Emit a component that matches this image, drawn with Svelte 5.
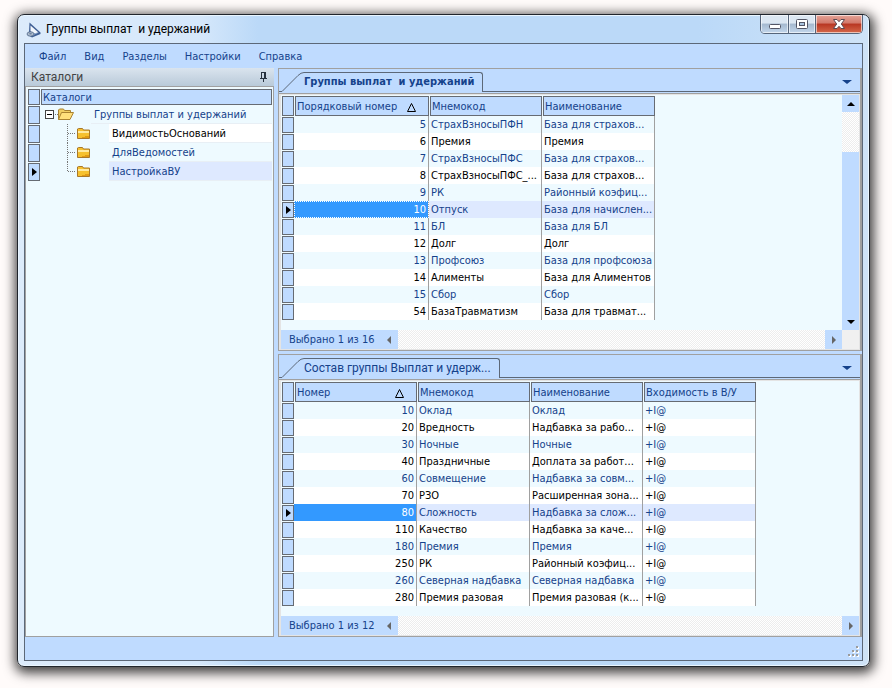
<script>
  let currentNode = 3
  let currentGroup = 5
  let currentItem = 6

  const menu = ['Файл', 'Вид', 'Разделы', 'Настройки', 'Справка']

  const nodes = [
    { title: 'Группы выплат и удержаний', root: true },
    { title: 'ВидимостьОснований' },
    { title: 'ДляВедомостей' },
    { title: 'НастройкаВУ' }
  ]

  const groups = {
    id: 'groups',
    columns: ['Порядковый номер', 'Мнемокод', 'Наименование'],
    rows: [
      [5, 'СтрахВзносыПФН', 'База для страхов...'],
      [6, 'Премия', 'Премия'],
      [7, 'СтрахВзносыПФС', 'База для страхов...'],
      [8, 'СтрахВзносыПФС_...', 'База для страхов...'],
      [9, 'РК', 'Районный коэфиц...'],
      [10, 'Отпуск', 'База для начислен...'],
      [11, 'БЛ', 'База для БЛ'],
      [12, 'Долг', 'Долг'],
      [13, 'Профсоюз', 'База для профсоюза'],
      [14, 'Алименты', 'База для Алиментов'],
      [15, 'Сбор', 'Сбор'],
      [54, 'БазаТравматизм', 'База для травмат...']
    ]
  }

  const items = {
    id: 'items',
    columns: ['Номер', 'Мнемокод', 'Наименование', 'Входимость в В/У'],
    rows: [
      [10, 'Оклад', 'Оклад', '+I@'],
      [20, 'Вредность', 'Надбавка за рабо...', '+I@'],
      [30, 'Ночные', 'Ночные', '+I@'],
      [40, 'Праздничные', 'Доплата за работ...', '+I@'],
      [60, 'Совмещение', 'Надбавка за совм...', '+I@'],
      [70, 'РЗО', 'Расширенная зона...', '+I@'],
      [80, 'Сложность', 'Надбавка за слож...', '+I@'],
      [110, 'Качество', 'Надбавка за каче...', '+I@'],
      [180, 'Премия', 'Премия', '+I@'],
      [250, 'РК', 'Районный коэфиц...', '+I@'],
      [260, 'Северная надбавка', 'Северная надбавка', '+I@'],
      [280, 'Премия разовая', 'Премия разовая (к...', '+I@']
    ]
  }

  $: panes = [
    { grid: groups, title: 'Группы выплат  и удержаний', current: currentGroup, active: true, vscroll: true, status: 'Выбрано 1 из 16' },
    { grid: items, title: 'Состав группы Выплат и удерж...', current: currentItem, status: 'Выбрано 1 из 12' }
  ]

  function select(grid, i) {
    if (grid === groups) currentGroup = i
    else currentItem = i
  }
</script>

<div class="desktop">
  <div class="window">
    <header class="titlebar">
      <svg class="logo" width="16" height="16" viewBox="0 0 16 16">
        <path d="M3.500 .5 L3 10 L1 12.500 L6 15.500 L14.500 12 V10.500 Z" fill="#3f5f94" />
        <path d="M4.500 3.500 L12.500 10.500 L7 11.500 L4.500 9 Z" fill="#f4f8fd" />
        <path d="M7 11.500 L13 10.500 L7.500 13 Z" fill="#9db6d8" />
        <ellipse cx="4.500" cy="12" rx="3.500" ry="2.200" fill="#aebccd" stroke="#526a8c" stroke-width="0.8" />
        <ellipse cx="4.500" cy="11.800" rx="1.400" ry="0.800" fill="#6b7f9c" />
      </svg>
      <h1>Группы выплат&nbsp; и удержаний</h1>
      <div class="caption">
        <button class="min" aria-label="Свернуть">
          <svg width="12" height="6" viewBox="0 0 12 6"><rect x=".5" y=".5" width="11" height="4" rx="1" fill="#fff" stroke="#535666" /></svg>
        </button>
        <button class="max" aria-label="Развернуть">
          <svg width="12" height="10" viewBox="0 0 12 10">
            <rect x=".5" y=".5" width="11" height="9" rx="1" fill="#fff" stroke="#535666" />
            <rect x="3.500" y="3.500" width="5" height="3" fill="#a8c3de" stroke="#535666" />
          </svg>
        </button>
        <button class="shut" aria-label="Закрыть">
          <svg width="12" height="10" viewBox="0 0 12 10">
            <path d="M.5 .5 H4 L6 2.700 L8 .5 H11.500 L8.300 5 L11.500 9.500 H8 L6 7.300 L4 9.500 H.5 L3.700 5 Z" fill="#fff" stroke="#5d4b52" />
          </svg>
        </button>
      </div>
    </header>

    <div class="client">
      <nav>
        {#each menu as item}
          <button>{item}</button>
        {/each}
      </nav>

      <div class="work">
        <aside>
          <div class="dock-title">
            <h2>Каталоги</h2>
            <button aria-label="Закрепить">
              <svg width="9" height="11" viewBox="0 0 9 11" shape-rendering="crispEdges">
                <path d="M2 0h5v6h1v1H5v3H4V7H1V6h1zM3 1v5h2V1z" fill="#27323f" fill-rule="evenodd" />
              </svg>
            </button>
          </div>
          <div class="tree">
            <div class="tree-row tree-head">
              <span class="mark"></span>
              <span class="tree-caption">Каталоги</span>
            </div>
            {#each nodes as node, i}
              <div class="tree-row">
                <span class="mark" class:current={i === currentNode}></span>
                {#if node.root}
                  <svg class="branch" width="51" height="19" viewBox="0 0 51 19">
                    <rect x="5.500" y="5.500" width="8" height="8" fill="#fff" stroke="#444" />
                    <path d="M7 9.500H12" stroke="#000" />
                    <path d="M15 9.500H18" stroke="#777" stroke-dasharray="1 1" />
                    <path d="M18.500 14.500V5l1-1h4l1 1.500h6V8" fill="#f0cd62" stroke="#a98231" />
                    <path d="M18.500 14.500L21.500 7.500H33.500l-3.500 7z" fill="#ffdf7b" stroke="#a98231" />
                  </svg>
                {:else}
                  <svg class="branch" width="69" height="19" viewBox="0 0 69 19">
                    <path d={i === nodes.length - 1 ? 'M27.500 0V9.500H36' : 'M27.500 0V19M28 9.500H36'} fill="none" stroke="#777" stroke-dasharray="1 1" />
                    <path d="M37.500 14.500V5l1-.5h4l1 1.500h6v8.500z" fill="#f6c12f" stroke="#a8782a" />
                    <path d="M38 8.500H49M38 7.500H49" stroke="#ffeaa0" />
                    <path d="M42 13.500H49M45 12.500H49" stroke="#e09a14" />
                  </svg>
                {/if}
                <button class="node" class:current={i === currentNode} on:click={() => (currentNode = i)}>{node.title}</button>
              </div>
            {/each}
          </div>
        </aside>

        <main>
          {#each panes as pane}
            <section>
              <div class="tabs">
                <button class="tab" class:active={pane.active}>
                  <svg width="25" height="20" viewBox="0 0 25 20"><path d="M0 19.500H3L19 3.500Q22 .5 25 .5" fill="none" stroke="#5c6878" /></svg>
                  <span>{pane.title}</span>
                </button>
                <div class="strip">
                  <button class="drop" aria-label="Список вкладок"></button>
                </div>
              </div>
              <div class="sheet">
                <div class="view">
                  <div class="grid">
                    <table class={pane.grid.id}>
                      <thead>
                        <tr>
                          <th class="sel"><span class="mark"></span></th>
                          {#each pane.grid.columns as column, c}
                            <th class:num={c === 0}>
                              <div class="head">
                                {column}
                                {#if c === 0}
                                  <svg width="9" height="9" viewBox="0 0 9 9"><path d="M.5 8.500H8.500L4.500 .5z" fill="none" stroke="#000" /></svg>
                                {/if}
                              </div>
                            </th>
                          {/each}
                        </tr>
                      </thead>
                      <tbody>
                        {#each pane.grid.rows as row, i}
                          <tr class:current={i === pane.current} on:click={() => select(pane.grid, i)}>
                            <td class="sel"><span class="mark" class:current={i === pane.current}></span></td>
                            {#each row as value, c}
                              <td class:num={c === 0}>{value}</td>
                            {/each}
                          </tr>
                        {/each}
                      </tbody>
                    </table>
                  </div>
                  {#if pane.vscroll}
                    <div class="vscroll">
                      <button class="up" aria-label="Вверх"></button>
                      <div class="track"></div>
                      <div class="thumb"></div>
                      <button class="down" aria-label="Вниз"></button>
                    </div>
                  {/if}
                </div>
                <footer>
                  <div class="status">
                    <span>{pane.status}</span>
                    <button class="left" aria-label="Влево"></button>
                  </div>
                  <div class="track"></div>
                  <button class="right" aria-label="Вправо"></button>
                  {#if pane.vscroll}<div class="corner"></div>{/if}
                </footer>
              </div>
            </section>
          {/each}
        </main>
      </div>

      <div class="statusbar">
        <svg width="12" height="12" viewBox="0 0 12 12" shape-rendering="crispEdges">
          <path d="M9 1h2v2H9zM5 5h2v2H5zM9 5h2v2H9zM1 9h2v2H1zM5 9h2v2H5zM9 9h2v2H9z" fill="#fff" />
          <path d="M8 0h2v2H8zM4 4h2v2H4zM8 4h2v2H8zM0 8h2v2H0zM4 8h2v2H4zM8 8h2v2H8z" fill="#9b9b9b" />
        </svg>
      </div>
    </div>
  </div>
</div>

<style>
  :global(body) {
    background: #fffbfa;
  }
  .desktop,
  .desktop * {
    box-sizing: border-box;
  }
  .desktop {
    --blue: #bfdbff;
    --pane: #eefaff;
    --ink: #15428b;
    --edge: #5c6878;
    --gray: #a0a0a0;
    display: flex;
    height: 100vh;
    padding: 14px 22px 21px 17px;
    font: 11px/17px 'DejaVu Sans Condensed', 'DejaVu Sans', sans-serif;
    color: var(--ink);
  }
  button {
    padding: 0;
    border: 0;
    background: none;
    font: inherit;
    color: inherit;
    text-align: left;
  }
  h1,
  h2 {
    margin: 0;
    font-weight: 400;
  }
  .window {
    flex: 1;
    min-width: 0;
    display: flex;
    flex-direction: column;
    padding: 0 6px 5px;
    border: 1px solid #20252c;
    border-radius: 7px;
    background: linear-gradient(90deg, #dcebfb, #d6e8fb 180px, #bbd9f8 240px, #bbd9f8 80%, #cfe3f7);
    box-shadow:
      inset 0 0 0 1px #eaf6ff,
      1px 3px 12px 3px rgba(0, 0, 0, 0.75);
  }
  .titlebar {
    display: flex;
    height: 28px;
    padding-left: 2px;
  }
  .logo {
    margin: 7px 4px 0 0;
  }
  h1 {
    flex: 1;
    font-family: Roboto, sans-serif;
    font-size: 12px;
    line-height: 29px;
    color: #000;
  }
  .caption {
    display: flex;
    height: 19px;
    border: 1px solid #56657a;
    border-top: 0;
    border-radius: 0 0 5px 5px;
    overflow: hidden;
  }
  .caption button {
    display: flex;
    align-items: center;
    justify-content: center;
    box-shadow: inset 0 0 0 1px rgba(255, 255, 255, 0.6);
  }
  .min,
  .max {
    width: 27px;
    border-right: 1px solid #56657a;
    background: linear-gradient(#dce7f2 45%, #a5b9cf 50%, #c3d7ec);
  }
  .min {
    width: 28px;
  }
  .caption .min {
    padding-top: 5px;
    border-right: 1px solid #56657a;
  }
  .caption .max {
    border-right: 1px solid #56657a;
  }
  .shut {
    width: 46px;
    background: linear-gradient(#e5a498, #d2786a 45%, #b83622 50%, #d5694b);
  }
  .client {
    flex: 1;
    min-height: 0;
    display: flex;
    flex-direction: column;
    border: 1px solid var(--edge);
    background: var(--blue);
  }
  nav {
    display: flex;
    gap: 18px;
    height: 24px;
    padding: 1px 0 0 14px;
    line-height: 24px;
  }
  .work {
    flex: 1;
    min-height: 0;
    display: flex;
    gap: 4px;
  }
  aside {
    width: 249px;
    display: flex;
    flex-direction: column;
  }
  .dock-title {
    display: flex;
    align-items: center;
    justify-content: space-between;
    height: 18px;
    padding: 1px 6px 0;
    background: linear-gradient(#dae4ee, #b9cad9);
    color: #444;
  }
  .dock-title h2 {
    font-family: Roboto, sans-serif;
    font-size: 12px;
  }
  .dock-title svg {
    display: block;
  }
  .tree {
    flex: 1;
    padding: 2px 1px 0 2px;
    border: 1px solid var(--gray);
    background: var(--pane);
  }
  .tree-row {
    display: flex;
    height: 19px;
  }
  .tree-head {
    height: 16px;
  }
  .mark {
    display: flex;
    align-items: center;
    justify-content: center;
    width: 12px;
    height: 16px;
    margin-top: 1px;
    border: 1px solid #666b73;
    background: var(--blue);
  }
  .mark.current::after {
    content: '';
    border: 4px solid transparent;
    border-left: 5px solid #000;
    border-right: 0;
  }
  .tree .mark {
    height: 18px;
  }
  .tree .tree-head .mark {
    height: 16px;
    margin-top: 0;
  }
  .tree-caption {
    flex: 1;
    height: 16px;
    margin-left: 1px;
    padding-left: 1px;
    border: 1px solid #666b73;
    background: var(--blue);
    line-height: 15px;
  }
  .branch {
    flex: none;
  }
  .node {
    flex: 1;
    padding-left: 3px;
    border-bottom: 1px solid #e8eff5;
    white-space: nowrap;
  }
  .tree-row:nth-child(odd) .node {
    background: #fff;
    color: #000;
  }
  .tree-row .node.current {
    background: #dee9ff;
    color: var(--ink);
  }
  main {
    flex: 1;
    min-width: 0;
    display: flex;
    flex-direction: column;
    gap: 3px;
  }
  section {
    flex: 1;
    min-height: 0;
    display: flex;
    flex-direction: column;
    border: 1px solid var(--gray);
    border-right-width: 2px;
  }
  .tabs {
    display: flex;
    padding-top: 3px;
    margin-bottom: 1px;
  }
  .tab {
    display: flex;
    height: 20px;
    font-family: Roboto, sans-serif;
    font-size: 12px;
    line-height: 18px;
    white-space: pre;
  }
  .tab.active {
    font: 700 11px/18px 'DejaVu Sans Condensed', 'DejaVu Sans', sans-serif;
  }
  .tab span {
    padding-right: 8px;
    border: 1px solid var(--edge);
    border-width: 1px 1px 0 0;
    border-radius: 0 3px 0 0;
  }
  .strip {
    flex: 1;
    display: flex;
    align-items: center;
    justify-content: flex-end;
    padding-right: 8px;
    border-bottom: 1px solid var(--edge);
  }
  .drop {
    border: 5px solid transparent;
    border-top: 4px solid var(--ink);
    border-bottom: 0;
  }
  .sheet {
    flex: 1;
    min-height: 0;
    display: flex;
    flex-direction: column;
    padding: 1px 1px 1px 2px;
    border-top: 1px solid var(--gray);
    background: #e4e4e4;
  }
  .view {
    flex: 1;
    min-height: 0;
    display: flex;
  }
  .grid {
    flex: 1;
    min-width: 0;
    overflow: hidden;
    background: var(--pane);
  }
  table {
    width: 374px;
    table-layout: fixed;
    border-collapse: separate;
    border-spacing: 0;
  }
  table.items {
    width: 475px;
  }
  th,
  td {
    height: 17px;
    padding: 0 0 0 2px;
    border-right: 1px solid var(--gray);
    line-height: 16px;
    font-weight: 400;
    text-align: left;
    white-space: nowrap;
    overflow: hidden;
  }
  th {
    width: 113px;
    height: 21px;
    padding: 1px 0 0 1px;
    border: 0;
  }
  th.num {
    width: 135px;
  }
  .items th.num {
    width: 123px;
  }
  th.sel {
    width: 13px;
  }
  td.sel {
    padding: 0 0 0 1px;
    border: 0;
    background: var(--pane);
  }
  th .mark {
    height: 20px;
    margin: 0;
  }
  .head {
    display: flex;
    align-items: center;
    justify-content: space-between;
    height: 20px;
    padding: 2px 12px 0 1px;
    border: 1px solid #666b73;
    background: var(--blue);
  }
  tbody tr:nth-child(even) {
    background: #fff;
    color: #000;
  }
  tbody tr.current {
    background: #dee9ff;
    color: var(--ink);
  }
  td.num {
    padding: 0 2px 0 0;
    text-align: right;
  }
  .current td.num {
    background: #39f;
    color: #fff;
  }
  .groups .current td.num {
    outline: 1px dotted #fff;
    outline-offset: -1px;
  }
  .track {
    flex: 1;
    background: repeating-conic-gradient(#ededed 0 25%, #fff 0 50%) 0 0 / 2px 2px;
  }
  .vscroll {
    display: flex;
    flex-direction: column;
    width: 17px;
  }
  .vscroll .thumb {
    flex: 4;
    background: var(--blue);
  }
  .up,
  .down,
  .right {
    flex: none;
    display: flex;
    align-items: center;
    justify-content: center;
    width: 17px;
    height: 17px;
    background: var(--blue);
  }
  .up::after,
  .down::after {
    content: '';
    border: 4px solid transparent;
    border-top: 0;
    border-bottom-color: #000;
  }
  .down::after {
    border: 4px solid transparent;
    border-bottom: 0;
    border-top-color: #000;
  }
  footer {
    display: flex;
    height: 19px;
    line-height: 19px;
  }
  .status {
    display: flex;
    align-items: center;
    justify-content: space-between;
    width: 117px;
    padding: 0 7px 0 8px;
    background: var(--blue);
  }
  .left {
    border: 4px solid transparent;
    border-left: 0;
    border-right-color: #666;
  }
  .right {
    height: 19px;
  }
  .right::after {
    content: '';
    border: 4px solid transparent;
    border-right: 0;
    border-left-color: #666;
  }
  .corner {
    width: 17px;
    background: #f0f0f0;
  }
  .statusbar {
    display: flex;
    align-items: flex-end;
    justify-content: flex-end;
    height: 23px;
    padding: 2px;
  }
</style>
